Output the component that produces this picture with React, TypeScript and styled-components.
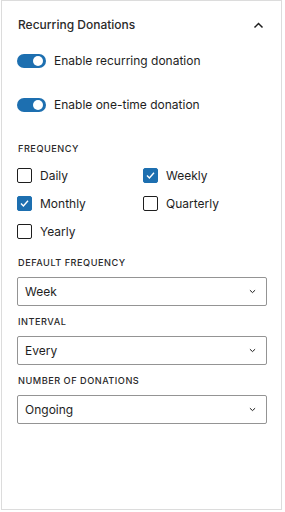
import React from "react";
import styled, { createGlobalStyle } from "styled-components";

const Global = createGlobalStyle`
  html, body { margin: 0; padding: 0; background: #fff; }
  body { font-family: Inter, "Noto Sans", "Liberation Sans", sans-serif; color: #1e1e1e; }
  * { box-sizing: border-box; }
`;

const Panel = styled.div`
  margin-left: 1px;
  width: 281px;
  height: 510px;
  border: 1px solid #dcdcdc;
  background: #fff;
  display: flex;
  flex-direction: column;
`;

const Header = styled.div`
  display: flex;
  align-items: center;
  justify-content: space-between;
  padding: 15px 17px 0 16px;
  height: 33px;
`;

const Title = styled.h2`
  margin: 0;
  font-size: 12px;
  font-weight: 500;
  line-height: 18px;
  color: #2a2a2a;
`;

const Body = styled.div`
  display: flex;
  flex-direction: column;
  padding: 0 13px 0 15px;
`;

const ToggleRow = styled.label<{ $mt: number }>`
  display: flex;
  align-items: center;
  gap: 8px;
  height: 18px;
  margin-top: ${(p) => p.$mt}px;
  font-size: 12px;
  line-height: 18px;
  color: #1e1e1e;
`;

const Track = styled.span`
  position: relative;
  width: 29px;
  height: 14px;
  border-radius: 7px;
  background: #1d6fb0;
  flex: none;
`;

const Knob = styled.span`
  position: absolute;
  right: 3px;
  top: 2px;
  width: 10px;
  height: 10px;
  border-radius: 50%;
  background: #fff;
`;

const SectionLabel = styled.div<{ $mt: number }>`
  margin-top: ${(p) => p.$mt}px;
  margin-left: 1px;
  font-size: 9.2px;
  font-weight: 500;
  line-height: 12px;
  letter-spacing: 0.5px;
  text-transform: uppercase;
  color: #2a2a2a;
`;

const CheckGrid = styled.div`
  display: grid;
  grid-template-columns: 126px 1fr;
  row-gap: 10px;
  margin-top: 11px;
`;

const CheckItem = styled.label`
  display: flex;
  align-items: center;
  gap: 8px;
  height: 18px;
  font-size: 12px;
  color: #1e1e1e;
`;

const Box = styled.span<{ $checked: boolean }>`
  width: 15px;
  height: 15px;
  border-radius: 2px;
  border: 1px solid ${(p) => (p.$checked ? "#1d6fb0" : "#1e1e1e")};
  background: ${(p) => (p.$checked ? "#1d6fb0" : "#fff")};
  display: flex;
  align-items: center;
  justify-content: center;
  flex: none;
`;

const Select = styled.div`
  margin-top: 8px;
  width: 250px;
  height: 29px;
  border: 1px solid #949494;
  border-radius: 2px;
  display: flex;
  align-items: center;
  justify-content: space-between;
  padding: 0 10px 0 7px;
  font-size: 12px;
  color: #1e1e1e;
`;

const ChevronUp = () => (
  <svg width="11" height="7" viewBox="0 0 11 7" fill="none">
    <path d="M1.5 5.5 L5.5 1.5 L9.5 5.5" stroke="#1e1e1e" strokeWidth="1.5" />
  </svg>
);

const ChevronDown = () => (
  <svg width="7" height="5" viewBox="0 0 7 5" fill="none">
    <path d="M0.9 1.2 L3.5 3.6 L6.1 1.2" stroke="#1e1e1e" strokeWidth="1" />
  </svg>
);

const Check = () => (
  <svg width="11" height="9" viewBox="0 0 11 9" fill="none">
    <path d="M2 4.6 L4.4 7 L9 1.8" stroke="#fff" strokeWidth="1.4" />
  </svg>
);

const Toggle = ({ label, mt }: { label: string; mt: number }) => (
  <ToggleRow $mt={mt}>
    <Track>
      <Knob />
    </Track>
    {label}
  </ToggleRow>
);

const CB = ({ label, checked }: { label: string; checked: boolean }) => (
  <CheckItem>
    <Box $checked={checked}>{checked && <Check />}</Box>
    {label}
  </CheckItem>
);

export default function App() {
  return (
    <>
      <Global />
      <Panel>
        <Header>
          <Title>Recurring Donations</Title>
          <ChevronUp />
        </Header>
        <Body>
          <Toggle label="Enable recurring donation" mt={18} />
          <Toggle label="Enable one-time donation" mt={26} />
          <SectionLabel $mt={29}>Frequency</SectionLabel>
          <CheckGrid>
            <CB label="Daily" checked={false} />
            <CB label="Weekly" checked={true} />
            <CB label="Monthly" checked={true} />
            <CB label="Quarterly" checked={false} />
            <CB label="Yearly" checked={false} />
          </CheckGrid>
          <SectionLabel $mt={17}>Default Frequency</SectionLabel>
          <Select>
            <span>Week</span>
            <ChevronDown />
          </Select>
          <SectionLabel $mt={10}>Interval</SectionLabel>
          <Select>
            <span>Every</span>
            <ChevronDown />
          </Select>
          <SectionLabel $mt={10}>Number of Donations</SectionLabel>
          <Select>
            <span>Ongoing</span>
            <ChevronDown />
          </Select>
        </Body>
      </Panel>
    </>
  );
}
